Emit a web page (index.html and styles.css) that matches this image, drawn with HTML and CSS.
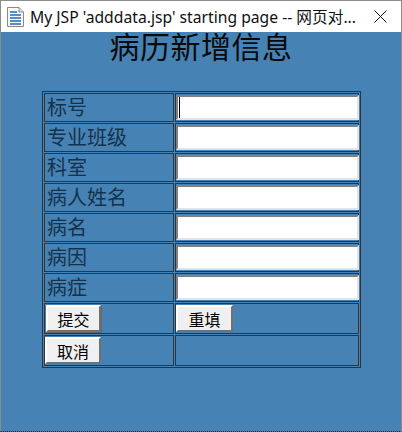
FILE: index.html
```html
<!DOCTYPE html>
<html lang="zh-CN">

<head>
    <meta charset="UTF-8">
    <title>My JSP 'adddata.jsp' starting page</title>
    <link rel="stylesheet" href="styles.css">
</head>

<body>
    <div class="titlebar">
        <svg class="doc" width="17" height="20" viewBox="0 0 17 20">
            <path d="M.5.5H12L16.500 5V19.500H.5Z" fill="#f8f8f8" stroke="#8a8a8a" />
            <path d="M12 .5V5H16.500" fill="#dcdcdc" stroke="#8a8a8a" />
            <path d="M3 5H10M3 8H14M3 11H14M3 14H14M3 17H14" stroke="#4f8fd0" stroke-width="2" />
        </svg>
        <span class="caption">My JSP 'adddata.jsp' starting page -- 网页对...</span>
        <svg class="close" width="13" height="13" viewBox="0 0 13 13">
            <path d="M.5.5L12.500 12.500M12.500.5L.5 12.500" stroke="#111" fill="none" />
        </svg>
    </div>
    <div class="page">
        <h1>病历新增信息</h1>
        <form>
            <table>
                <tr>
                    <td class="label">标号</td>
                    <td class="field"><input type="text" class="first"><span class="caret"></span></td>
                </tr>
                <tr>
                    <td class="label">专业班级</td>
                    <td class="field"><input type="text"></td>
                </tr>
                <tr>
                    <td class="label">科室</td>
                    <td class="field"><input type="text"></td>
                </tr>
                <tr>
                    <td class="label">病人姓名</td>
                    <td class="field"><input type="text"></td>
                </tr>
                <tr>
                    <td class="label">病名</td>
                    <td class="field"><input type="text"></td>
                </tr>
                <tr>
                    <td class="label">病因</td>
                    <td class="field"><input type="text"></td>
                </tr>
                <tr>
                    <td class="label">病症</td>
                    <td class="field"><input type="text"></td>
                </tr>
                <tr class="btnrow">
                    <td class="label"><button type="button" class="submit">提交</button></td>
                    <td class="field"><button type="button" class="reset">重填</button></td>
                </tr>
                <tr class="btnrow">
                    <td class="label"><button type="button" class="cancel">取消</button></td>
                    <td class="field"></td>
                </tr>
            </table>
        </form>
    </div>
</body>

</html>
```

FILE: styles.css
```css
* {
    margin: 0;
    padding: 0;
    box-sizing: border-box;
}

html,
body {
    height: 100%;
}

body {
    display: flex;
    flex-direction: column;
    border-left: 1px solid #8c8c8c;
    border-right: 1px solid #8c8c8c;
    border-top: 1px solid #8c8c8c;
    border-bottom: 1px dotted #12263a;
    background-color: #4682b4;
    font-family: "Noto Sans CJK SC", sans-serif;
    overflow: hidden;
}

.titlebar {
    display: flex;
    align-items: center;
    height: 31px;
    padding-left: 6px;
    background-color: #fff;
}

.doc {
    flex: none;
}

.caption {
    margin-left: 6px;
    font-family: "Noto Sans", "Noto Sans CJK SC", sans-serif;
    font-size: 15.7px;
    color: #111;
    white-space: nowrap;
}

.close {
    flex: none;
    margin-left: auto;
    margin-right: 14px;
}

.page {
    flex: 1;
}

h1 {
    height: 59px;
    padding-bottom: 3px;
    font-size: 30px;
    font-weight: 400;
    letter-spacing: .5px;
    line-height: 27px;
    text-align: center;
    color: #0a0a0a;
}

table {
    margin-left: 41px;
    width: 319px;
    border: 1px solid #333;
    border-spacing: 1px;
    table-layout: fixed;
}

td {
    height: 29px;
    border: 1px solid #2b3640;
}

.btnrow td {
    height: 31px;
}

.label {
    width: 130px;
    padding-left: 2px;
    padding-bottom: 2px;
    font-size: 20px;
    line-height: 25px;
    color: #16324a;
}

.btnrow .label {
    padding-left: 0;
    padding-bottom: 0;
}

.field {
    position: relative;
}

input {
    display: block;
    width: 183px;
    height: 25px;
    border: 2px solid;
    border-color: #808080 #e3e3e3 #e3e3e3 #808080;
    background-color: #fff;
}

.caret {
    position: absolute;
    left: 3px;
    top: 3px;
    width: 1px;
    height: 21px;
    background-color: #000;
}

button {
    display: block;
    height: 27px;
    border: 2px solid;
    border-color: #fff #707070 #707070 #fff;
    background-color: #f0f0f0;
    font-family: "Noto Sans CJK SC", sans-serif;
    font-size: 16px;
    line-height: 22px;
    color: #000;
}

.submit {
    width: 55px;
    margin-left: 1px;
    box-shadow: 1px 1px 0 #666;
}

.reset {
    width: 57px;
}

.cancel {
    width: 56px;
}
```
